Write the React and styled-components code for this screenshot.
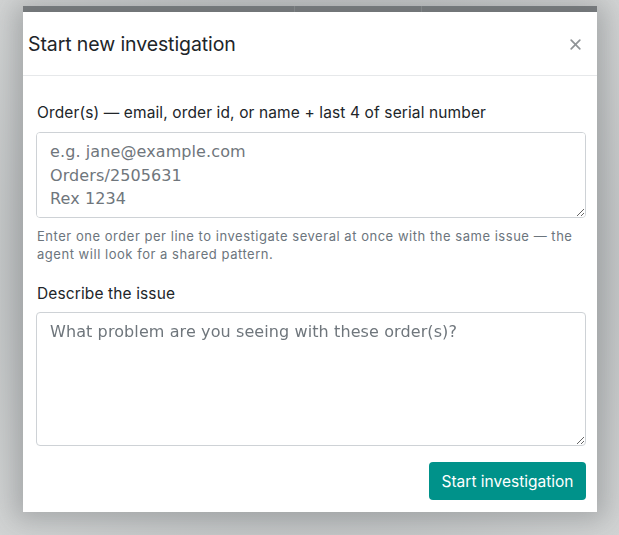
import React from "react";
import styled, { createGlobalStyle } from "styled-components";

const Global = createGlobalStyle`
  html, body { margin: 0; padding: 0; }
  body {
    width: 619px; height: 535px; overflow: hidden;
    background: radial-gradient(ellipse at center, #b3b6b7 0%, #bcbfc0 55%, #d2d4d4 100%);
    font-family: "Inter", "Liberation Sans", sans-serif;
  }
`;

const Page = styled.div`
  width: 619px;
  height: 535px;
  box-sizing: border-box;
  padding: 6px 0 0 23px;
  display: flex;
  flex-direction: column;
`;

const BackStrip = styled.div`
  width: 574px;
  height: 6px;
  background: #7c8083;
  display: grid;
  grid-template-columns: 271px 127px 1fr;
  & > span + span { border-left: 1px solid #8e9294; }
`;

const Modal = styled.div`
  width: 574px;
  height: 500px;
  background: #fff;
  box-shadow: 0 0 24px 8px rgba(80, 84, 86, 0.3);
  display: flex;
  flex-direction: column;
  box-sizing: border-box;
`;

const Header = styled.div`
  height: 64px;
  box-sizing: border-box;
  border-bottom: 1px solid #e6e8ea;
  display: flex;
  align-items: center;
  justify-content: space-between;
  padding: 1px 16px 0 5px;
`;

const Title = styled.h2`
  margin: 0;
  font-size: 19.5px;
  font-weight: 400;
  color: #212529;
  letter-spacing: -0.1px;
`;

const Close = styled.button`
  border: 0;
  background: none;
  padding: 0;
  width: 11px;
  height: 11px;
  display: flex;
  cursor: pointer;
`;

const Body = styled.div`
  padding: 27px 11px 0 13px;
  display: flex;
  flex-direction: column;
`;

const Label = styled.label`
  font-size: 15.5px;
  letter-spacing: 0.12px;
  color: #212529;
  line-height: 20px;
  padding-left: 1px;
  margin-bottom: ${(p) => p.$mb}px;
`;

const Area = styled.textarea`
  display: block;
  width: 550px;
  height: ${(p) => p.$h}px;
  box-sizing: border-box;
  border: 1px solid #ced2d6;
  border-radius: 4px;
  padding: 7px 13px;
  font-family: "DejaVu Sans", Verdana, sans-serif;
  font-size: 16px;
  letter-spacing: 0.1px;
  line-height: 23.5px;
  color: #212529;
  resize: vertical;
  &::placeholder { color: #6f767c; }
`;

const Help = styled.p`
  margin: 9px 0 21px 1px;
  font-size: 13px;
  letter-spacing: 0.53px;
  line-height: 18px;
  color: #6c757d;
`;

const Footer = styled.div`
  display: flex;
  justify-content: flex-end;
  padding: 16px 11px 0 0;
`;

const Primary = styled.button`
  height: 38px;
  width: 157px;
  border: 0;
  border-radius: 4px;
  background: #00928a;
  color: #fff;
  font-family: "Inter", "Liberation Sans", sans-serif;
  font-size: 15.5px;
  cursor: pointer;
`;

export default function App() {
  return (
    <>
      <Global />
      <Page>
        <BackStrip>
          <span />
          <span />
          <span />
        </BackStrip>
        <Modal>
          <Header>
            <Title>Start new investigation</Title>
            <Close aria-label="Close">
              <svg width="11" height="11" viewBox="0 0 11 11">
                <path d="M1.2 1.2 L9.8 9.8 M9.8 1.2 L1.2 9.8" stroke="#909497" strokeWidth="1.7" strokeLinecap="round" />
              </svg>
            </Close>
          </Header>
          <Body>
            <Label $mb={9}>Order(s) — email, order id, or name + last 4 of serial number</Label>
            <Area
              $h={86}
              placeholder={"e.g. jane@example.com\nOrders/2505631\nRex 1234"}
            />
            <Help>
              Enter one order per line to investigate several at once with the same issue — the agent will look for a shared pattern.
            </Help>
            <Label $mb={8}>Describe the issue</Label>
            <Area $h={134} placeholder="What problem are you seeing with these order(s)?" />
          </Body>
          <Footer>
            <Primary>Start investigation</Primary>
          </Footer>
        </Modal>
      </Page>
    </>
  );
}
